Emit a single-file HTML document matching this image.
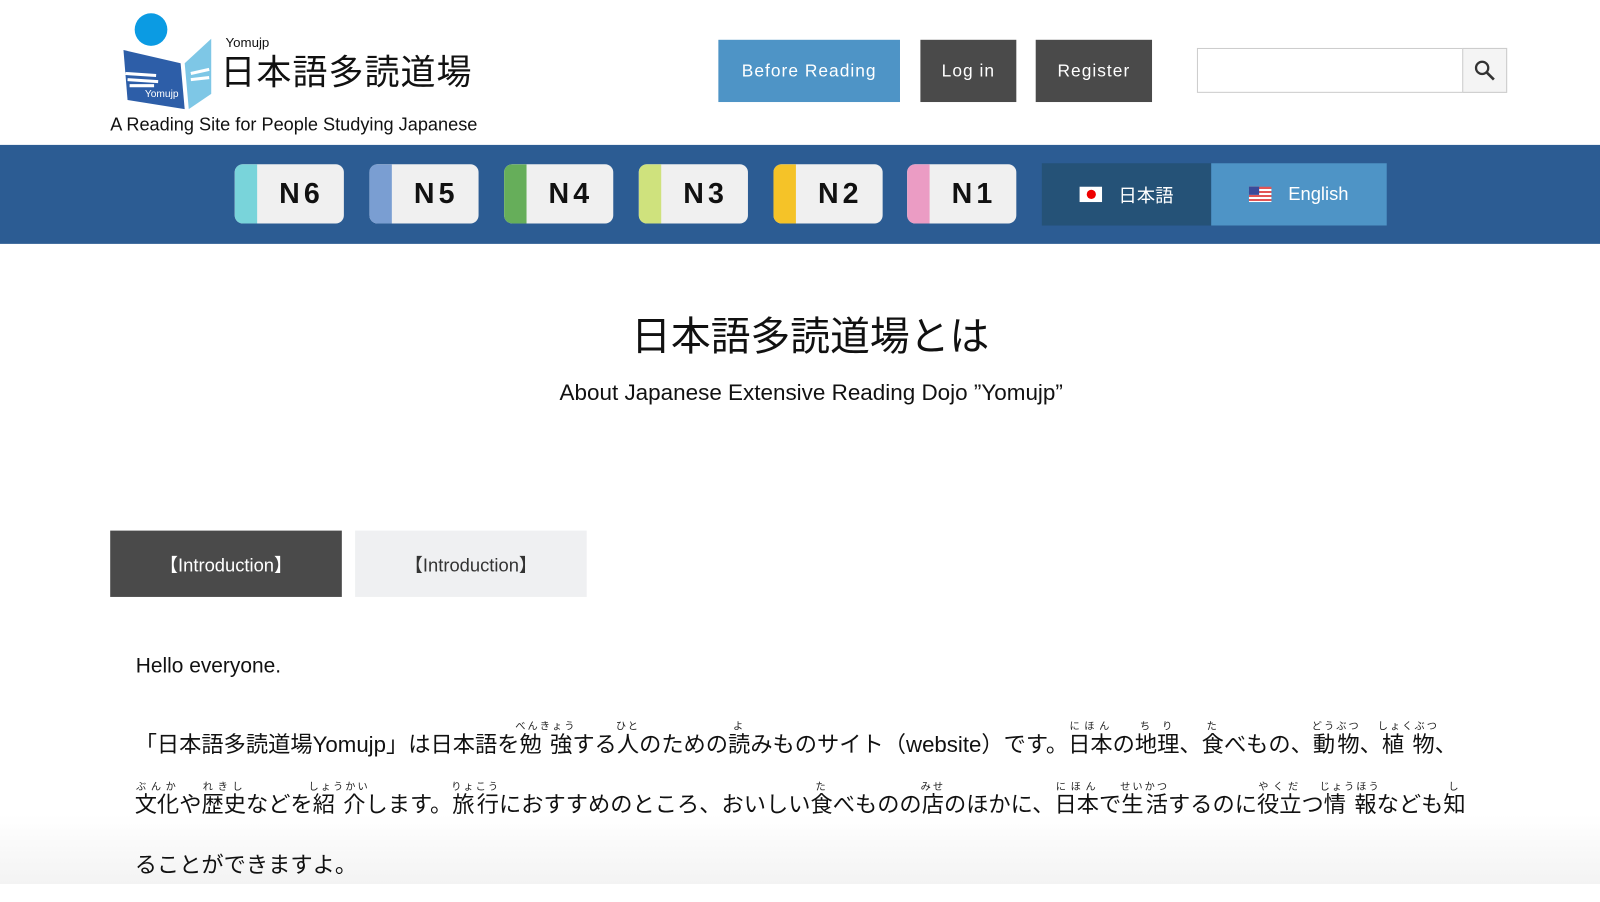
<!DOCTYPE html>
<html><head><meta charset="utf-8"><style>
*{margin:0;padding:0;box-sizing:border-box}
body{width:1600px;height:884px;overflow:hidden;background:#fff;font-family:"Liberation Sans","Noto Sans CJK JP",sans-serif;color:#111;position:relative}
#w{position:absolute;left:0;top:0;width:1600px;height:884px;transform:scale(1.0204);transform-origin:0 0}
.abs{position:absolute}
.btn{position:absolute;top:39px;height:61px;color:#fff;font-size:17px;letter-spacing:1px;display:flex;align-items:center;justify-content:center}
.nav{position:absolute;top:142px;left:0;width:1600px;height:97px;background:#2c5c93}
.lv{position:absolute;top:19px;width:107px;height:58px;background:#f0f0f0;border-radius:8px;overflow:hidden;font-weight:bold;font-size:28px;letter-spacing:4px;display:flex;align-items:center;justify-content:center;padding-left:24px}
.lv i{position:absolute;left:0;top:0;bottom:0;width:22px}
.line{position:absolute;left:132px;font-size:21.8px;white-space:nowrap;line-height:1}
rt{font-size:10px;color:#222;letter-spacing:2px}
ruby{ruby-position:over}
</style></head><body>
<div class="abs" style="left:0;top:815px;width:1600px;height:69px;background:linear-gradient(rgba(240,240,240,0),rgba(235,235,235,.6))"></div>
<div id="w">
<svg class="abs" style="left:115px;top:12px" width="100" height="98" viewBox="0 0 100 98">
<circle cx="33" cy="17" r="16" fill="#0b9be3"/>
<path d="M6 37 L62 50 L66 95 L10 86 Z" fill="#2d5ea8"/>
<path d="M66 50 L92 26 L92 80 L70 95 Z" fill="#7ec7e6"/>
<path d="M8 60 L38 62 M10 66 L40 68 M12 72 L36 72" stroke="#fff" stroke-width="3"/>
<path d="M72 60 L90 56 M72 66 L90 64" stroke="#fff" stroke-width="3"/>
<text x="27" y="83" font-size="10" fill="#fff" font-family="Liberation Sans">Yomujp</text>
</svg>
<div class="abs" style="left:221px;top:34px;font-size:13px">Yomujp</div>
<div class="abs" style="left:216px;top:54px;font-size:34.3px;letter-spacing:1px;line-height:1.1">日本語多読道場</div>
<div class="abs" style="left:108px;top:112px;font-size:17.8px">A Reading Site for People Studying Japanese</div>
<div class="btn" style="left:704px;width:178px;background:#4e94c6">Before Reading</div>
<div class="btn" style="left:902px;width:94px;background:#4a4a4a">Log in</div>
<div class="btn" style="left:1015px;width:114px;background:#4a4a4a">Register</div>
<div class="abs" style="left:1173px;top:47px;width:304px;height:44px;border:1px solid #ccc"></div>
<div class="abs" style="left:1433px;top:47px;width:44px;height:44px;border:1px solid #ccc;background:#f4f4f4"></div>
<svg class="abs" style="left:1444px;top:58px" width="22" height="22" viewBox="0 0 22 22"><circle cx="8.5" cy="8.5" r="6" fill="none" stroke="#333" stroke-width="2.2"/><path d="M13 13 L20 20" stroke="#333" stroke-width="2.6"/></svg>
<div class="nav">
<div class="lv" style="left:230px"><i style="background:#79d4da"></i>N6</div>
<div class="lv" style="left:362px"><i style="background:#7a9ed2"></i>N5</div>
<div class="lv" style="left:494px"><i style="background:#66ae5a"></i>N4</div>
<div class="lv" style="left:626px"><i style="background:#cfe27d"></i>N3</div>
<div class="lv" style="left:758px"><i style="background:#f5c328"></i>N2</div>
<div class="lv" style="left:889px"><i style="background:#eb9cc4"></i>N1</div>
<div class="abs" style="left:1021px;top:18px;width:166px;height:61px;background:#255277;color:#fff;font-size:18px;display:flex;align-items:center;justify-content:center;gap:16px"><span style="width:22px;height:15px;background:#fff;display:inline-flex;align-items:center;justify-content:center"><span style="width:9px;height:9px;border-radius:50%;background:#e00"></span></span>日本語</div>
<div class="abs" style="left:1187px;top:18px;width:172px;height:61px;background:#4e94c6;color:#fff;font-size:18px;display:flex;align-items:center;justify-content:center;gap:16px"><span style="width:22px;height:15px;background:repeating-linear-gradient(#e25555 0 2px,#fff 2px 4px);position:relative"><span style="position:absolute;left:0;top:0;width:10px;height:8px;background:#3a4a9a"></span></span>English</div>
</div>
<div class="abs" style="left:0;width:1588px;top:299px;text-align:center;font-size:39px">日本語多読道場とは</div>
<div class="abs" style="left:0;width:1590px;top:372px;text-align:center;font-size:22px">About Japanese Extensive Reading Dojo ”Yomujp”</div>
<div class="abs" style="left:108px;top:520px;width:227px;height:65px;background:#4a4a4a;color:#fff;font-size:18px;display:flex;align-items:center;justify-content:center">【Introduction】</div>
<div class="abs" style="left:348px;top:520px;width:227px;height:65px;background:#eff0f2;color:#333;font-size:18px;display:flex;align-items:center;justify-content:center">【Introduction】</div>
<div class="abs" style="left:133px;top:641px;font-size:20.5px">Hello everyone.</div>
<div class="line" style="top:707px">「日本語多読道場Yomujp」は日本語を<ruby>勉強<rt>べんきょう</rt></ruby>する<ruby>人<rt>ひと</rt></ruby>のための<ruby>読<rt>よ</rt></ruby>みものサイト（website）です。<ruby>日本<rt>にほん</rt></ruby>の<ruby>地理<rt>ちり</rt></ruby>、<ruby>食<rt>た</rt></ruby>べもの、<ruby>動物<rt>どうぶつ</rt></ruby>、<ruby>植物<rt>しょくぶつ</rt></ruby>、</div>
<div class="line" style="top:766px"><ruby>文化<rt>ぶんか</rt></ruby>や<ruby>歴史<rt>れきし</rt></ruby>などを<ruby>紹介<rt>しょうかい</rt></ruby>します。<ruby>旅行<rt>りょこう</rt></ruby>におすすめのところ、おいしい<ruby>食<rt>た</rt></ruby>べものの<ruby>店<rt>みせ</rt></ruby>のほかに、<ruby>日本<rt>にほん</rt></ruby>で<ruby>生活<rt>せいかつ</rt></ruby>するのに<ruby>役立<rt>やくだ</rt></ruby>つ<ruby>情報<rt>じょうほう</rt></ruby>なども<ruby>知<rt>し</rt></ruby></div>
<div class="line" style="top:837px">ることができますよ。</div>
</div>
</body></html>
